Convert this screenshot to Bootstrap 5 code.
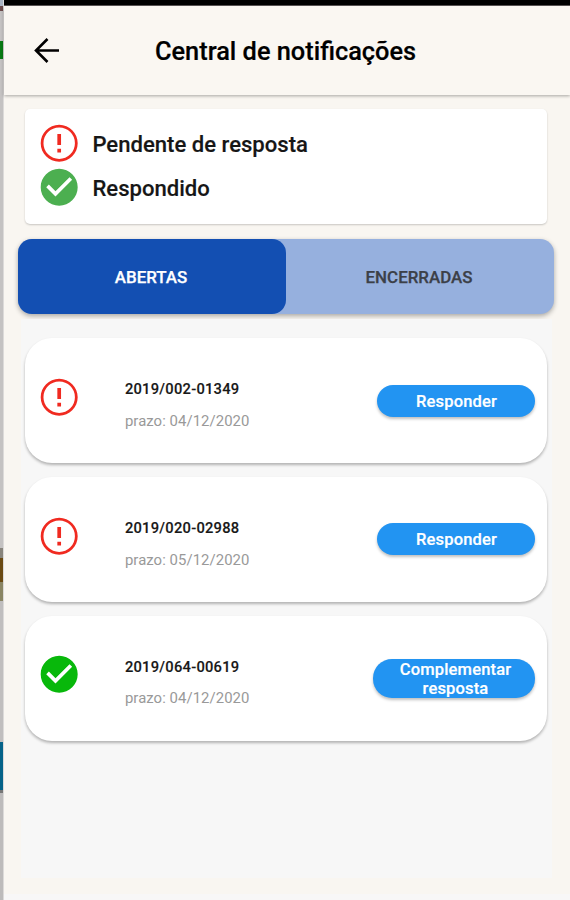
<!DOCTYPE html>
<html lang="pt-BR">
<head>
<meta charset="utf-8">
<meta name="viewport" content="width=device-width, initial-scale=1">
<title>Central de notificações</title>
<link href="https://cdn.jsdelivr.net/npm/bootstrap@5.3.0/dist/css/bootstrap.min.css" rel="stylesheet">
<style>
body { font-family: Roboto, "Liberation Sans", sans-serif; height: 900px; overflow: hidden; background: #f9f6f1; color: #000; }
.edge-strip { width: 3px; background: linear-gradient(#a9b4c4 0 6px, #6d4c4c 6px 11px, #c4c2c2 11px 41px, #087a14 41px 59px, #c4c2c2 59px 548px, #88847c 548px 558px, #6b4a12 558px 582px, #8a8563 582px 601px, #c0bebe 601px 742px, #066388 742px 790px, #777 790px 793px, #bdbbbb 793px); }
.screen { border-left: 1px solid #dcdad9; }
.status-strip { height: 6px; background: linear-gradient(#000 5px, #5c5757 5px); }
.top-bar { height: 89px; padding: 0 29px; background: #faf7f2; box-shadow: 0 1px 3px rgba(0,0,0,.33); z-index: 1; }
.top-bar h1 { font-size: 25.35px; font-weight: 500; line-height: 30px; margin-left: 94px; -webkit-text-stroke: .2px #000; }
.legend-box { margin: 14px 23px 0 21px; height: 115px; padding: 12px 12px; border-radius: 5px; background: #fff; box-shadow: 0 1px 2px rgba(0,0,0,.2); font-size: 22.1px; font-weight: 500; line-height: 46px; }
.legend-box div { height: 44.4px; }
.legend-box span { margin-left: 11px; color: #161616; -webkit-text-stroke: .15px #161616; }
.glyph { width: 44.4px; height: 44.4px; flex: none; display: block; }
.tab-group { margin: 15px 16px 0 14px; height: 75px; border-radius: 14px; background: #96b0de; box-shadow: 0 2px 5px rgba(0,0,0,.32); }
.tab-group button { width: 50%; border: 0; border-radius: 14px; background: none; padding: 2px 2px 0 0; font-size: 16.9px; font-weight: 500; color: #3c4048; -webkit-text-stroke: .25px; }
.tab-group button.on { background: #134fb2; color: #fff; }
.list-area { margin: 5px 18px 0 17px; height: 559px; padding: 19px 5px 0 4px; gap: 13.8px; background: #f7f7f7; }
.notice { height: 125px; flex: none; padding: 0 12px; border-radius: 27px; background: #fff; box-shadow: 0 2px 3px rgba(0,0,0,.28); }
.notice .glyph { margin-top: -7px; }
.notice-text { margin: 9px 0 0 43.500px; width: 200px; }
.notice-id { font-size: 14.7px; font-weight: 500; line-height: 20px; color: #181818; letter-spacing: .26px; -webkit-text-stroke: .15px #181818; }
.due { font-size: 14.9px; line-height: 20px; margin-top: 11.500px; color: #999; letter-spacing: .06px; }
.reply { width: 158px; height: 32px; border: 0; border-radius: 19px; padding: 1px 0 0 1px; background: #2294f2; color: #fff; font-size: 16.5px; font-weight: 500; line-height: 19px; letter-spacing: .16px; -webkit-text-stroke: .2px; box-shadow: 0 2px 3px rgba(0,0,0,.25); }
.reply.tall { width: 162px; height: 39px; padding-left: 3px; }
.bottom-bar { height: 6px; background: #f8f7f7; margin-top: auto; }
</style>
<script src="https://cdn.jsdelivr.net/npm/bootstrap@5.3.0/dist/js/bootstrap.bundle.min.js"></script>
</head>
<body class="d-flex">
<svg class="d-none" xmlns="http://www.w3.org/2000/svg">
  <symbol id="pending" viewBox="0 0 24 24"><path d="M11 15h2v2h-2zm0-8h2v6h-2zm.99-5C6.47 2 2 6.48 2 12s4.47 10 9.99 10C17.52 22 22 17.52 22 12S17.52 2 11.99 2zM12 20.5a8.5 8.5 0 1 1 0-17 8.5 8.5 0 0 1 0 17z"/></symbol>
  <symbol id="answered" viewBox="0 0 24 24"><path d="M12 2C6.48 2 2 6.48 2 12s4.480 10 10 10 10-4.480 10-10S17.520 2 12 2zm-2 15l-5-5 1.410-1.410L10 14.170l7.590-7.590L19 8l-9 9z"/></symbol>
</svg>
<div class="edge-strip"></div>
<main class="screen d-flex flex-column flex-grow-1">
  <div class="status-strip"></div>
  <header class="top-bar d-flex align-items-center position-relative">
    <svg width="28" height="28" viewBox="0 0 28 28" fill="none" stroke="#000" stroke-width="2.6" aria-label="Voltar"><path d="M26 13.500H3M14.500 2L3 13.500l11.500 11.500"/></svg>
    <h1 class="mb-0">Central de notificações</h1>
  </header>
  <section class="legend-box">
    <div class="d-flex"><svg class="glyph" fill="#f02a20"><use href="#pending"/></svg><span>Pendente de resposta</span></div>
    <div class="d-flex"><svg class="glyph" fill="#4caf50"><use href="#answered"/></svg><span>Respondido</span></div>
  </section>
  <div class="tab-group d-flex">
    <button class="on">ABERTAS</button>
    <button>ENCERRADAS</button>
  </div>
  <section class="list-area d-flex flex-column">
    <article class="notice d-flex align-items-center">
      <svg class="glyph" fill="#f02a20"><use href="#pending"/></svg>
      <div class="notice-text"><div class="notice-id">2019/002-01349</div><div class="due">prazo: 04/12/2020</div></div>
      <button class="reply ms-auto">Responder</button>
    </article>
    <article class="notice d-flex align-items-center">
      <svg class="glyph" fill="#f02a20"><use href="#pending"/></svg>
      <div class="notice-text"><div class="notice-id">2019/020-02988</div><div class="due">prazo: 05/12/2020</div></div>
      <button class="reply ms-auto">Responder</button>
    </article>
    <article class="notice d-flex align-items-center">
      <svg class="glyph" fill="#08b80b"><use href="#answered"/></svg>
      <div class="notice-text"><div class="notice-id">2019/064-00619</div><div class="due">prazo: 04/12/2020</div></div>
      <button class="reply tall ms-auto">Complementar<br>resposta</button>
    </article>
  </section>
  <div class="bottom-bar"></div>
</main>
</body>
</html>
